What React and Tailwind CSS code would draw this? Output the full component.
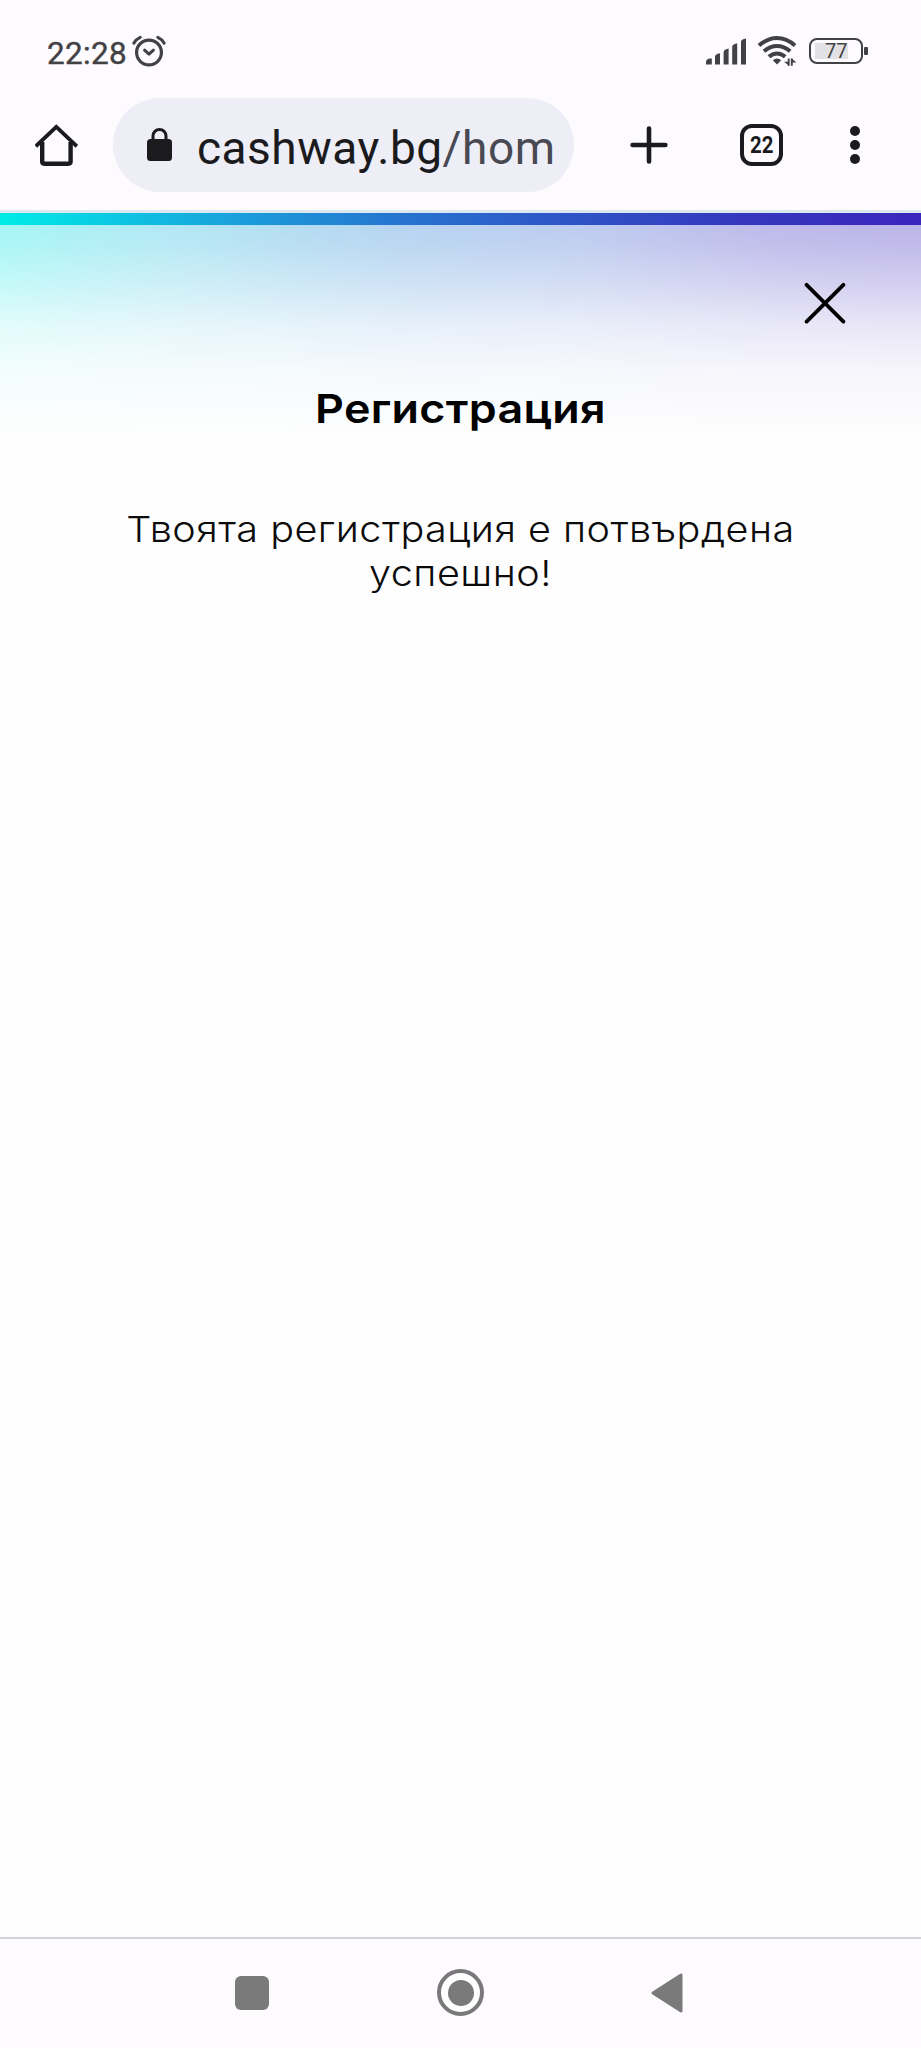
import React from 'react';

const AlarmIcon = () => (
  <svg width="36" height="34" viewBox="0 0 36 34" fill="none" stroke="#424144" strokeLinecap="round">
    <circle cx="18" cy="18.5" r="12.4" strokeWidth="3.2" />
    <path d="M13.6 16.2l4.4 4 4.4-4" strokeWidth="3" strokeLinejoin="round" />
    <path d="M2.8 9.3Q5 5.2 9.2 3.4M33.2 9.3Q31 5.2 26.8 3.4" strokeWidth="3" />
  </svg>
);

const SignalIcon = () => (
  <svg width="42" height="28" viewBox="0 0 42 28" fill="#424144">
    <path d="M1 26.5V24q0-3 3.5-3.5H6.8v6z" />
    <path d="M10 26.5V18.5q0-1.5 2-2.5l3-.8V26.5z" />
    <path d="M18.6 26.5V14q0-1.6 2-2.5l3-1V26.5z" />
    <path d="M27.2 26.5V8.8q0-1.6 2-2.5l3-1V26.5z" />
    <path d="M36 26.5V4q0-2 2.2-2.8L41 .5V26.5z" />
  </svg>
);

const WifiIcon = () => (
  <svg width="40" height="32" viewBox="0 0 40 32" fill="none" stroke="#424144">
    <path d="M2 11.5Q10.5 4 20 4t18 7.5" strokeWidth="4" />
    <path d="M7 17.3Q13 12 20 12t13.2 5.3" strokeWidth="4" />
    <path d="M12 22.8Q15.5 19.4 20 19.4t8.2 3.4" strokeWidth="4" />
    <path d="M15.8 26.3q4.2-3.6 8.4 0L20 30.5z" fill="#424144" stroke="none" />
    <path d="M31.7 24.5v7.3M34.8 24.5v7.3" strokeWidth="1.9" />
    <path d="M32 31.8l-5-4h5zM34.5 24.5l5 4h-5z" fill="#424144" stroke="none" />
  </svg>
);

const StatusBar = () => (
  <div className="flex h-[98px] items-start justify-between pl-[47px] pr-[53px] pt-[34px]">
    <div className="flex items-start">
      <span className="w-[84px] whitespace-nowrap pt-[2px] text-[31.5px] leading-9 tracking-[0.3px] text-[#424144] [-webkit-text-stroke:0.4px_#424144]">
        22:28
      </span>
      <AlarmIcon />
    </div>
    <div className="flex items-start">
      <div className="pt-[4px]">
        <SignalIcon />
      </div>
      <div className="pl-[10px]">
        <WifiIcon />
      </div>
      <div className="ml-[12px] mt-[4px] flex h-[26px] w-[54px] items-center rounded-[8px] border-2 border-[#424144] pl-[4px]">
        <div className="h-[16px] w-[33px] bg-[#e2e1e4]">
          <span className="block pl-[10px] text-[20px] leading-[17px] text-[#424144]">77</span>
        </div>
      </div>
      <div className="ml-[1px] mt-[13px] h-[8px] w-[4px] rounded-[1px] bg-[#424144]" />
    </div>
  </div>
);

const BrowserBar = () => (
  <div className="flex h-[112px] items-start">
    <svg className="ml-[35px] mt-[25px]" width="43" height="44" viewBox="0 0 43 44" fill="none" stroke="#1b1b1e" strokeWidth="4.4">
      <path d="M7.2 19v19.5q0 2.2 2.2 2.2h24q2.2 0 2.2-2.2V19" />
      <path d="M2.2 22L21.3 3.8 40.5 22" strokeLinecap="square" strokeWidth="3.8" />
    </svg>
    <div className="ml-[35px] flex h-[94px] w-[461px] items-start rounded-full bg-[#edeef6]">
      <svg className="ml-[33px] mt-[29px]" width="27" height="35" viewBox="0 0 27 35">
        <path d="M7 12.5V9a6.5 6.5 0 0 1 13 0v3.5" fill="none" stroke="#1b1b1e" strokeWidth="3" />
        <rect x="1" y="12" width="25" height="22" rx="3.5" fill="#1b1b1e" />
      </svg>
      <span className="ml-[24px] mt-[22px] whitespace-nowrap text-[46px] leading-[56px] tracking-[0.5px] text-[#1b1b1e]">
        cashway.bg<span className="text-[#494953]">/hom</span>
      </span>
    </div>
    <svg className="ml-[56px] mt-[28px]" width="38" height="38" viewBox="0 0 38 38" stroke="#1b1b1e" strokeWidth="4.6" strokeLinecap="round">
      <path d="M19 2.6v32.8M2.6 19h32.8" />
    </svg>
    <div className="ml-[72px] mt-[26px] flex h-[42px] w-[43px] items-center justify-center rounded-[12px] border-[4.5px] border-[#1b1b1e]">
      <span className="scale-x-[0.85] text-[24px] font-bold leading-none text-[#1b1b1e]">22</span>
    </div>
    <div className="ml-[67px] mt-[28px] flex flex-col gap-[4px]">
      <div className="size-[10px] rounded-full bg-[#1b1b1e]" />
      <div className="size-[10px] rounded-full bg-[#1b1b1e]" />
      <div className="size-[10px] rounded-full bg-[#1b1b1e]" />
    </div>
  </div>
);

const NavBar = () => (
  <div className="flex h-[111px] items-start border-t-2 border-[#d3d2da] bg-[#fdfbfe]">
    <div className="ml-[235px] mt-[37px] size-[34px] rounded-[6px] bg-[#7a7a7a]" />
    <div className="ml-[168px] mt-[30px] flex size-[47px] items-center justify-center rounded-full border-4 border-[#7a787b] bg-white">
      <div className="size-[26px] rounded-full bg-[#7a7a7a]" />
    </div>
    <svg className="ml-[167px] mt-[34px]" width="32" height="40" viewBox="0 0 32 40">
      <path d="M2 20L30 2v36z" fill="#7a7a7a" stroke="#7a7a7a" strokeWidth="3" strokeLinejoin="round" />
    </svg>
  </div>
);

const App = () => {
  return (
    <div className="flex h-[2048px] w-[921px] flex-col overflow-hidden bg-[#fefefe] font-['Roboto',sans-serif]">
      <div className="bg-[#fdfbfe]">
        <StatusBar />
        <BrowserBar />
        <div className="h-[3px] bg-[#dbe7f1]" />
      </div>
      <div className="h-[12px] bg-[linear-gradient(90deg,#00ece6_0%,#08cfe4_10%,#1a9edb_26%,#2577cf_42%,#2e57c8_60%,#3538be_80%,#3b26bd_100%)]" />

      <div className="flex-1 bg-[linear-gradient(180deg,rgba(254,254,254,0)_0px,rgba(254,254,254,0.08)_20px,rgba(254,254,254,0.36)_60px,rgba(254,254,254,0.67)_100px,rgba(254,254,254,0.88)_145px,#fefefe_215px),linear-gradient(90deg,#a6f6f6_0%,#b3e8f4_18%,#b6d5f1_42%,#bdccef_63%,#beb9ea_85%,#bcb5e8_100%)]">
        <div className="flex justify-end pr-[75px] pt-[57px]">
          <svg width="42" height="42" viewBox="0 0 42 42" stroke="#000" strokeWidth="3.8" strokeLinecap="round">
            <path d="M2.6 2.8l36.800 36.800M39.400 2.800L2.600 39.600" />
          </svg>
        </div>
        <h1 className="mt-[61px] scale-x-[1.12] text-center font-['Inter',sans-serif] text-[40px] font-semibold leading-[48px] tracking-[0.3px] text-black">
          Регистрация
        </h1>
        <p className="mt-[75px] scale-x-[1.12] text-center font-['Inter',sans-serif] text-[35.3px] font-light leading-[43.5px] tracking-[0.45px] text-[#0b0b0b]">
          Твоята регистрация е потвърдена
          <br />
          успешно!
        </p>
      </div>

      <NavBar />
    </div>
  );
};

export default App;
